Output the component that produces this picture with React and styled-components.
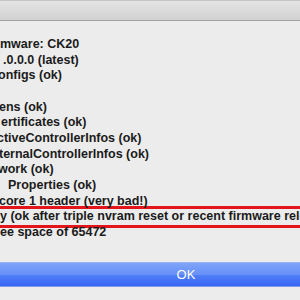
import React from "react";
import styled, { createGlobalStyle } from "styled-components";

const Global = createGlobalStyle`
    html, body {
        margin: 0;
        padding: 0;
        background: #ececec;
    }
    #root {
        width: 300px;
        height: 300px;
        overflow: hidden;
    }
`;

const Window = styled.div`
    width: 300px;
    height: 300px;
    display: flex;
    flex-direction: column;
    background: #ececec;
    overflow: hidden;
`;

const TitleBar = styled.div`
    height: 19px;
    flex-shrink: 0;
    border-top: 1px solid #c4c4c4;
    border-bottom: 1px solid #a2a2a2;
    background: linear-gradient(#e4e4e4, #d1d1d1);
`;

const Report = styled.div`
    padding-top: 16px;
    font-family: "Liberation Sans", Arial, sans-serif;
    font-weight: bold;
    font-size: 12.5px;
    line-height: 15.67px;
    color: #1b1b1b;
    white-space: nowrap;
`;

const Line = styled.div`
    height: 15.67px;
    margin-left: ${(props) => props.shift || 0}px;
`;

const Highlight = styled.div`
    height: 15.67px;
    margin: -3px -40px -3px -40px;
    padding-left: 37px;
    border: 3px solid #e3151b;
`;

const Footer = styled.div`
    padding-top: 21px;
    display: flex;
`;

const OkButton = styled.button`
    flex-shrink: 0;
    width: 628px;
    height: 25px;
    margin-left: -128px;
    padding: 0;
    border: none;
    border-top: 1px solid #9cb1f2;
    border-bottom: 1px solid #7d9be9;
    background: linear-gradient(#7fa4fa, #6890f8 50%, #5280f7 51%, #3765f5);
    color: #fff;
    font-family: "Liberation Sans", Arial, sans-serif;
    font-size: 13px;
`;

const lines = [
    { text: "mware: CK20", shift: 0 },
    { text: ".0.0.0 (latest)", shift: 3 },
    { text: "onfigs (ok)", shift: -2 },
    { text: "", shift: 0 },
    { text: "ens (ok)", shift: -1 },
    { text: "ertificates (ok)", shift: 1 },
    { text: "ctiveControllerInfos (ok)", shift: -3 },
    { text: "ternalControllerInfos (ok)", shift: -1 },
    { text: "work (ok)", shift: -2 },
    { text: "Properties (ok)", shift: 8 },
    { text: "core 1 header (very bad!)", shift: -1 },
];

const App = () => {
    return (
        <Window>
            <Global />
            <TitleBar />
            <Report>
                {lines.map((item, i) => (
                    <Line key={i} shift={item.shift}>{item.text}</Line>
                ))}
                <Highlight>y (ok after triple nvram reset or recent firmware release)</Highlight>
                <Line>ee space of 65472</Line>
            </Report>
            <Footer>
                <OkButton>OK</OkButton>
            </Footer>
        </Window>
    );
};

export default App;
